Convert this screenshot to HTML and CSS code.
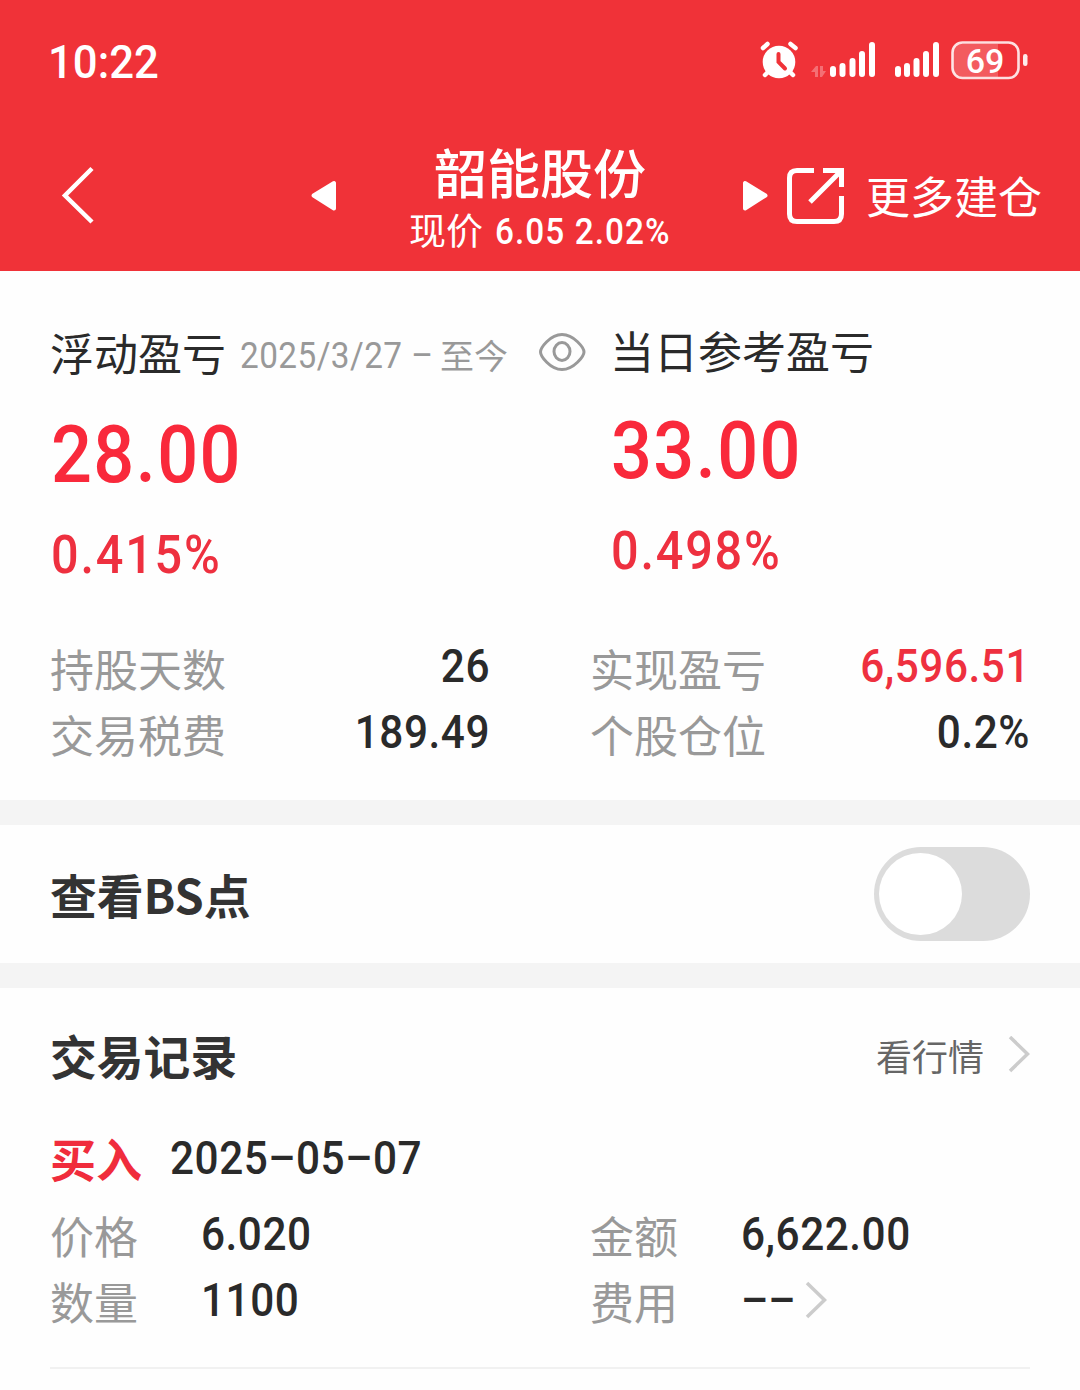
FILE: index.html
```html
<!DOCTYPE html>
<html lang="zh-CN">
<head>
    <meta charset="UTF-8">
    <meta name="viewport" content="width=device-width, initial-scale=1.0">
    <title>韶能股份</title>
    <link rel="stylesheet" href="styles.css">
</head>
<body>
    <header class="top">
        <div class="status-bar">
            <span class="num time">10:22</span>
            <svg class="status-icons" width="270" height="44" viewBox="0 0 270 44" fill="#fff">
                <!-- alarm -->
                <g stroke="#fff" stroke-linecap="round">
                    <circle cx="19" cy="23" r="16.300" stroke="none"/>
                    <path d="M3 9L7.500 5M30.500 5L35.500 9" stroke-width="4.500"/>
                    <path d="M8 33L5 36M30 33L33 36" stroke-width="4.500"/>
                    <path d="M18.500 15V23L25 29.500" stroke="#f03238" stroke-width="4" fill="none"/>
                </g>
                <!-- data arrows -->
                <g fill-opacity=".3">
                    <path d="M51 33L56 27H58V38H55V33Z"/>
                    <path d="M60 27H63V32H66L62 38H60Z"/>
                </g>
                <!-- signals -->
                <g stroke="#fff" stroke-width="6" stroke-linecap="round">
                    <path d="M73 30V35M82.500 27V35M92.500 22V35M102 15V35M112 6V35"/>
                    <path d="M138 30V35M147 27V35M156.500 22V35M166 15V35M176 6V35"/>
                </g>
                <!-- battery -->
                <path d="M202 5H238V38H202Q192 38 192 28V14Q192 5 202 5Z" fill-opacity=".2"/>
                <rect x="192.500" y="3.500" width="66" height="35.500" rx="10" fill="none" stroke="#fff" stroke-opacity=".85" stroke-width="2.600"/>
                <rect x="263" y="15" width="4.500" height="12" rx="2.200" fill-opacity=".9"/>
                <text class="battery-text" x="225" y="33.500" text-anchor="middle">69</text>
            </svg>
        </div>
        <nav class="nav-bar">
            <svg class="back" width="34" height="60" viewBox="0 0 34 60" fill="none" stroke="#fff" stroke-width="4.500">
                <path d="M32 2.500L5 29.500L32 56"/>
            </svg>
            <svg class="prev" width="28" height="34" viewBox="0 0 28 34" fill="#fff" stroke="#fff" stroke-width="4" stroke-linejoin="round">
                <path d="M24 4V29.500L3.500 16.500Z"/>
            </svg>
            <div class="title">
                <h1>韶能股份</h1>
                <p>现价 <span class="num quote">6.05 2.02%</span></p>
            </div>
            <svg class="next" width="28" height="34" viewBox="0 0 28 34" fill="#fff" stroke="#fff" stroke-width="4" stroke-linejoin="round">
                <path d="M3 4V29.500L23.500 16.500Z"/>
            </svg>
            <svg class="share" width="60" height="60" viewBox="0 0 60 60" fill="none" stroke="#fff" stroke-width="5">
                <path d="M29 4.500H12Q4.500 4.500 4.500 12V48Q4.500 55.500 12 55.500H49Q56.500 55.500 56.500 48V30"/>
                <path d="M38 4.500H56.500V21M56 5L25 36"/>
            </svg>
            <span class="more">更多建仓</span>
        </nav>
    </header>

    <section class="profit">
        <div class="profit-main">
            <div class="profit-col">
                <div class="profit-label">
                    <span>浮动盈亏</span>
                    <span class="range"><span class="num range-num">2025/3/27 –</span>至今</span>
                    <svg class="eye" width="48" height="40" viewBox="0 0 48 40" fill="none" stroke="#999" stroke-width="3">
                        <path d="M1.500 20C1.500 16 11 2.500 23 2.500S45 16 45 20S35 37.500 23 37.500S1.500 24 1.500 20Z"/>
                        <ellipse cx="23" cy="19.500" rx="8" ry="9"/>
                    </svg>
                </div>
                <div class="num amount">28.00</div>
                <div class="num percent">0.415%</div>
            </div>
            <div class="profit-col today">
                <div class="profit-label">当日参考盈亏</div>
                <div class="num amount">33.00</div>
                <div class="num percent">0.498%</div>
            </div>
        </div>
        <div class="stats">
            <span class="label">持股天数</span><span class="num value">26</span>
            <span class="label second">实现盈亏</span><span class="num value red">6,596.51</span>
            <span class="label">交易税费</span><span class="num value">189.49</span>
            <span class="label second">个股仓位</span><span class="num value">0.2%</span>
        </div>
    </section>

    <section class="bs-row">
        <h2>查看BS点</h2>
        <span class="switch"><span class="knob"></span></span>
    </section>

    <section class="records">
        <div class="records-head">
            <h2>交易记录</h2>
            <span class="link">看行情</span>
            <svg class="arrow" width="22" height="38" viewBox="0 0 22 38" fill="none" stroke="#ccc" stroke-width="3.500">
                <path d="M2 1L19.500 18L2 35"/>
            </svg>
        </div>
        <div class="record">
            <div class="record-title">
                <span class="buy">买入</span>
                <span class="num date">2025–05–07</span>
            </div>
            <div class="fields">
                <span class="label">价格</span><span class="num field">6.020</span>
                <span class="label">金额</span><span class="num field">6,622.00</span>
                <span class="label">数量</span><span class="num field">1100</span>
                <span class="label">费用</span>
                <span class="fee">
                    <span class="num field dash">––</span>
                    <svg class="arrow" width="22" height="38" viewBox="0 0 22 38" fill="none" stroke="#ccc" stroke-width="3.500">
                        <path d="M2 2L19.500 19L2 36"/>
                    </svg>
                </span>
            </div>
        </div>
    </section>
</body>
</html>
```
FILE: styles.css
```css
* {
    box-sizing: border-box;
    margin: 0;
    padding: 0;
}

body {
    width: 1080px;
    height: 1390px;
    overflow: hidden;
    background: #fefefe;
    color: #2a2a2a;
    font-family: "Noto Sans CJK SC", sans-serif;
    font-size: 44px;
}

svg {
    display: block;
    flex-shrink: 0;
}

h1, h2, span, p, div {
    white-space: nowrap;
}

/* digits are slightly condensed */
.num {
    display: inline-block;
    font-family: Roboto, sans-serif;
    font-weight: 500;
    letter-spacing: 0.6px;
    transform: scaleX(0.9);
    transform-origin: left center;
}

/* header */
.top {
    height: 271px;
    background: #f03238;
    color: #fff;
}

.status-bar {
    display: flex;
    justify-content: space-between;
    height: 123px;
    padding: 39px 50px 0 48px;
}

.time {
    font-size: 47px;
    line-height: 46px;
    letter-spacing: 0;
    transform: scaleX(0.93);
}

.battery-text {
    font-family: Roboto, sans-serif;
    font-size: 34px;
    font-weight: 500;
}

.nav-bar {
    display: flex;
    align-items: center;
    height: 146px;
    padding-left: 60px;
}

.prev {
    margin-left: 216px;
}

.title {
    width: 404px;
    padding-top: 8px;
    text-align: center;
}

.title h1 {
    font-size: 53px;
    font-weight: 500;
    line-height: 60px;
}

.title p {
    display: flex;
    padding-left: 71px;
    font-size: 37px;
    font-weight: 400;
    line-height: 56px;
}

.quote {
    margin: 3px 0 0 12px;
    letter-spacing: 1.2px;
}

.share {
    margin-left: 15px;
}

.more {
    margin: -2px 0 0 21px;
}

/* profit summary */
.profit {
    height: 529px;
    padding: 48px 50px 0;
}

.profit-main {
    display: grid;
    grid-template-columns: 560px 1fr;
}

.profit-label {
    display: flex;
    align-items: center;
    height: 66px;
}

.today {
    margin-top: -4px;
}

.today .profit-label {
    padding-top: 3px;
}

.range {
    display: flex;
    margin: 6px 0 0 14px;
    width: 299px;
    color: #999;
    font-size: 34px;
}

.range-num {
    width: 200px;
    margin-top: 1px;
    font-weight: 400;
    font-size: 37px;
    line-height: 50px;
    letter-spacing: 0.5px;
}

.amount {
    display: block;
    margin: 20px 0 0 1px;
    color: #f9293b;
    font-size: 80px;
    line-height: 100px;
    letter-spacing: 1.6px;
}

.percent {
    display: block;
    margin: 15px 0 0 1px;
    color: #ee303f;
    font-size: 54px;
    line-height: 70px;
    letter-spacing: 2px;
}

.stats {
    display: grid;
    grid-template-columns: 200px 240px 300px 240px;
    margin-top: 45px;
    line-height: 66px;
}

.second {
    margin-left: 100px;
}

.label {
    color: #999;
}

.value {
    font-size: 47px;
    line-height: 61px;
    text-align: right;
    transform-origin: right center;
}

.red {
    color: #ee303f;
}

/* BS switch */
.bs-row {
    display: flex;
    justify-content: space-between;
    align-items: center;
    height: 188px;
    padding: 0 50px;
    border: solid #f4f4f4;
    border-width: 25px 0;
}

h2 {
    color: #333;
    font-size: 46.8px;
    font-weight: 700;
    line-height: 66px;
}

.switch {
    width: 156px;
    height: 94px;
    padding: 6px 5px;
    border-radius: 47px;
    background: #dcdcdc;
}

.knob {
    display: block;
    width: 83px;
    height: 82px;
    border-radius: 50%;
    background: #fff;
}

/* trade records */
.records {
    padding: 34px 50px 0;
}

.records-head {
    display: flex;
    align-items: center;
    height: 66px;
}

.link {
    margin-left: auto;
    color: #666;
    font-size: 36px;
}

.records-head .arrow {
    margin-left: 24px;
}

.record {
    height: 281px;
    border-bottom: 2px solid #f1f1f1;
    padding-top: 36px;
}

.record-title {
    display: flex;
    line-height: 66px;
}

.buy {
    width: 120px;
    color: #f02c3c;
    font-size: 46px;
    font-weight: 700;
}

.date {
    font-size: 47px;
    line-height: 67px;
}

.fields {
    display: grid;
    grid-template-columns: 151px 389px 151px 1fr;
    margin-top: 10px;
    line-height: 68px;
}

.fields > * {
    height: 66px;
}

.field {
    font-size: 47px;
    line-height: 65px;
}

.fee {
    display: flex;
    align-items: center;
}

.dash {
    width: 64px;
    line-height: 60px;
    letter-spacing: 0;
}
```
